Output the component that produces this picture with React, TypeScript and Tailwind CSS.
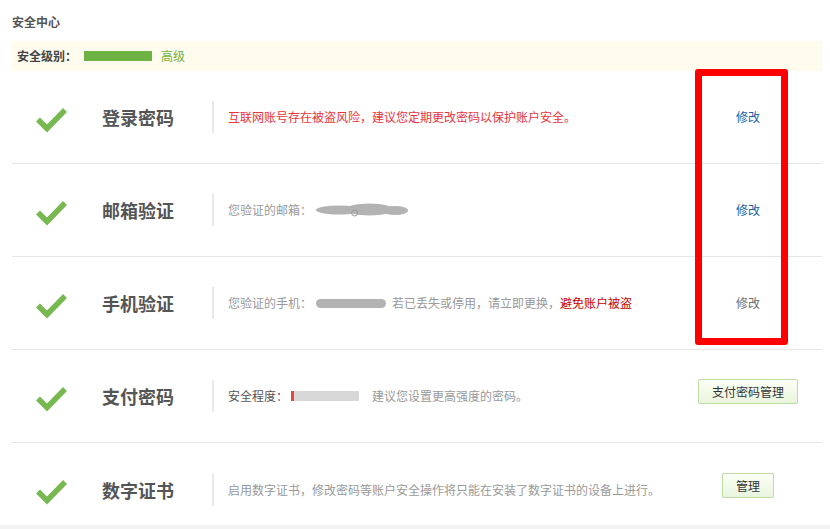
import React from "react";

const FONT = '"Noto Sans CJK SC", "Noto Sans", sans-serif';

function Check() {
  return (
    <svg width="34" height="28" viewBox="0 0 34 28" className="block">
      <polyline
        points="3,14.5 12,23.5 30,5"
        fill="none"
        stroke="#78b850"
        strokeWidth="5.5"
        strokeLinejoin="miter"
      />
    </svg>
  );
}

function Blob({ w }: { w: number }) {
  return (
    <svg width={w} height="14" viewBox={`0 0 ${w} 14`} className="block">
      <ellipse cx={w * 0.25} cy="7" rx={w * 0.25} ry="4.5" fill="#b3b3b3" />
      <ellipse cx={w * 0.58} cy="6.5" rx={w * 0.26} ry="6" fill="#b3b3b3" />
      <ellipse cx={w * 0.86} cy="7.5" rx={w * 0.14} ry="4.5" fill="#b3b3b3" />
      <circle cx={w * 0.42} cy="10" r="3" fill="none" stroke="#9a9a9a" strokeWidth="1" />
    </svg>
  );
}

function Row({
  title,
  children,
  action,
  last,
}: {
  title: string;
  children: React.ReactNode;
  action: React.ReactNode;
  last?: boolean;
}) {
  return (
    <div
      className={`flex h-[93px] shrink-0 items-center ${last ? "" : "border-b border-[#e6e6e6]"}`}
    >
      <div className="flex w-[90px] shrink-0 pl-[23px] pt-[3px]">
        <Check />
      </div>
      <div className="w-[110px] shrink-0 text-[18px] font-bold leading-[24px] text-[#555]">
        {title}
      </div>
      <div className="h-[32px] w-[2px] shrink-0 bg-[#e8e8e8]" />
      <div className="flex min-w-0 flex-1 items-center pl-[14px] text-[12px] leading-[16px] text-[#999]">
        {children}
      </div>
      <div className="flex w-[148px] shrink-0 justify-center">{action}</div>
    </div>
  );
}

function GreenButton({ label }: { label: string }) {
  return (
    <button className="mb-[9px] h-[25px] rounded-[2px] border border-[#bcdca6] bg-gradient-to-b from-[#fbfff6] to-[#e9f5dd] px-[13px] text-[12px] leading-[23px] text-[#333]">
      {label}
    </button>
  );
}

export default function App() {
  return (
    <div className="h-[529px] w-[830px] overflow-hidden bg-[#f3f3f3]" style={{ fontFamily: FONT }}>
      <div className="relative h-[525px] overflow-hidden bg-white pl-[12px] pr-[8px]">
        <div className="pt-[13px] text-[12px] font-bold leading-[18px] text-[#555]">安全中心</div>
        <div className="mt-[10px] flex h-[30px] items-center bg-[#fffcee] pl-[5px] text-[12px]">
          <span className="font-bold text-[#444]">安全级别：</span>
          <span className="ml-[7px] h-[10px] w-[68px] bg-[#6fb244]" />
          <span className="ml-[9px] text-[#6fae3f]">高级</span>
        </div>

        <div className="flex flex-col">
          <Row title="登录密码" action={<a className="text-[12px] text-[#1a5fa6]">修改</a>}>
            <span className="text-[#e8343b]">
              互联网账号存在被盗风险，建议您定期更改密码以保护账户安全。
            </span>
          </Row>

          <Row title="邮箱验证" action={<a className="text-[12px] text-[#1a5fa6]">修改</a>}>
            <span>您验证的邮箱：</span>
            <span className="ml-[4px]">
              <Blob w={92} />
            </span>
          </Row>

          <Row title="手机验证" action={<a className="text-[12px] text-[#6f6f6f]">修改</a>}>
            <span>您验证的手机：</span>
            <span className="ml-[4px] mr-[6px] h-[9px] w-[70px] rounded-full bg-[#b3b3b3]" />
            <span>若已丢失或停用，请立即更换，</span>
            <span className="text-[#c80000]">避免账户被盗</span>
          </Row>

          <Row title="支付密码" action={<GreenButton label="支付密码管理" />}>
            <span className="text-[#555]">安全程度：</span>
            <span className="ml-[3px] flex h-[10px] w-[68px] bg-[#d8d8d8]">
              <span className="h-full w-[3px] bg-[#e8473b]" />
            </span>
            <span className="ml-[13px]">建议您设置更高强度的密码。</span>
          </Row>

          <Row title="数字证书" action={<GreenButton label="管理" />} last>
            <span>启用数字证书，修改密码等账户安全操作将只能在安装了数字证书的设备上进行。</span>
          </Row>
        </div>

        <div className="pointer-events-none absolute left-[695px] top-[69px] h-[276px] w-[93px] rounded-[3px] border-[7px] border-[#ff0000]" />
      </div>
    </div>
  );
}
